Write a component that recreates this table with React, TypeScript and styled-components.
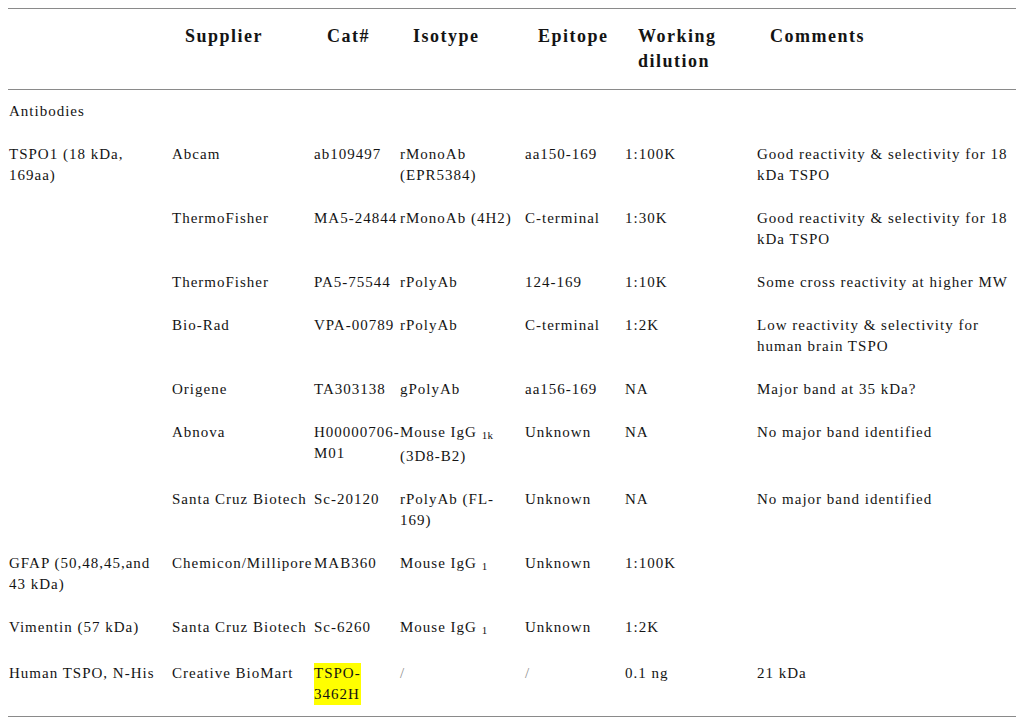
import React from "react";
import styled, { createGlobalStyle } from "styled-components";

const GlobalStyle = createGlobalStyle`
  html, body {
    margin: 0;
    padding: 0;
    background: #ffffff;
  }
`;

const SERIF = `"Liberation Serif", "Times New Roman", serif`;
const COLUMNS = "163px 142px 86px 125px 100px 132px 1fr";

type Row = {
  target?: React.ReactNode;
  supplier?: React.ReactNode;
  cat?: React.ReactNode;
  isotype?: React.ReactNode;
  epitope?: React.ReactNode;
  dilution?: React.ReactNode;
  comments?: React.ReactNode;
};

export default function App() {
  const rows: Row[] = [
    {
      target: (
        <>
          TSPO1 (18 kDa,
          <br />
          169aa)
        </>
      ),
      supplier: "Abcam",
      cat: "ab109497",
      isotype: (
        <>
          rMonoAb
          <br />
          (EPR5384)
        </>
      ),
      epitope: "aa150-169",
      dilution: "1:100K",
      comments: (
        <>
          Good reactivity &amp; selectivity for 18
          <br />
          kDa TSPO
        </>
      ),
    },
    {
      supplier: "ThermoFisher",
      cat: "MA5-24844",
      isotype: "rMonoAb (4H2)",
      epitope: "C-terminal",
      dilution: "1:30K",
      comments: (
        <>
          Good reactivity &amp; selectivity for 18
          <br />
          kDa TSPO
        </>
      ),
    },
    {
      supplier: "ThermoFisher",
      cat: "PA5-75544",
      isotype: "rPolyAb",
      epitope: "124-169",
      dilution: "1:10K",
      comments: "Some cross reactivity at higher MW",
    },
    {
      supplier: "Bio-Rad",
      cat: "VPA-00789",
      isotype: "rPolyAb",
      epitope: "C-terminal",
      dilution: "1:2K",
      comments: (
        <>
          Low reactivity &amp; selectivity for
          <br />
          human brain TSPO
        </>
      ),
    },
    {
      supplier: "Origene",
      cat: "TA303138",
      isotype: "gPolyAb",
      epitope: "aa156-169",
      dilution: "NA",
      comments: "Major band at 35 kDa?",
    },
    {
      supplier: "Abnova",
      cat: (
        <>
          H00000706-
          <br />
          M01
        </>
      ),
      isotype: (
        <>
          Mouse IgG <Sub>1k</Sub>
          <br />
          (3D8-B2)
        </>
      ),
      epitope: "Unknown",
      dilution: "NA",
      comments: "No major band identified",
    },
    {
      supplier: "Santa Cruz Biotech",
      cat: "Sc-20120",
      isotype: (
        <>
          rPolyAb (FL-
          <br />
          169)
        </>
      ),
      epitope: "Unknown",
      dilution: "NA",
      comments: "No major band identified",
    },
    {
      target: (
        <>
          GFAP (50,48,45,and
          <br />
          43 kDa)
        </>
      ),
      supplier: "Chemicon/Millipore",
      cat: "MAB360",
      isotype: (
        <>
          Mouse IgG <Sub>1</Sub>
        </>
      ),
      epitope: "Unknown",
      dilution: "1:100K",
    },
    {
      target: "Vimentin (57 kDa)",
      supplier: "Santa Cruz Biotech",
      cat: "Sc-6260",
      isotype: (
        <>
          Mouse IgG <Sub>1</Sub>
        </>
      ),
      epitope: "Unknown",
      dilution: "1:2K",
    },
    {
      target: "Human TSPO, N-His",
      supplier: "Creative BioMart",
      cat: (
        <Highlight>
          TSPO-
          <br />
          3462H
        </Highlight>
      ),
      isotype: <Slash>/</Slash>,
      epitope: <Slash>/</Slash>,
      dilution: "0.1 ng",
      comments: "21 kDa",
    },
  ];

  return (
    <>
      <GlobalStyle />
      <Table>
        <HeaderRow>
          <HeadCell />
          <HeadCell>Supplier</HeadCell>
          <HeadCell>Cat#</HeadCell>
          <HeadCell>Isotype</HeadCell>
          <HeadCell>Epitope</HeadCell>
          <HeadCell>
            Working
            <br />
            dilution
          </HeadCell>
          <HeadCell>Comments</HeadCell>
        </HeaderRow>
        <Body>
          <BodyRow>
            <Cell>Antibodies</Cell>
          </BodyRow>
          {rows.map((r, i) => (
            <BodyRow key={i}>
              <Cell>{r.target}</Cell>
              <Cell>{r.supplier}</Cell>
              <Cell>{r.cat}</Cell>
              <Cell>{r.isotype}</Cell>
              <Cell>{r.epitope}</Cell>
              <Cell>{r.dilution}</Cell>
              <Cell>{r.comments}</Cell>
            </BodyRow>
          ))}
        </Body>
      </Table>
    </>
  );
}

const Table = styled.div`
  margin: 8px 8px 0;
  width: 1008px;
  font-family: ${SERIF};
  color: #141414;
  border-top: 1px solid #8a8a8a;
  border-bottom: 1px solid #8a8a8a;
`;

const HeaderRow = styled.div`
  display: grid;
  grid-template-columns: ${COLUMNS};
  padding: 15px 0 15px 14px;
  border-bottom: 1px solid #8a8a8a;
`;

const HeadCell = styled.div`
  font-family: ${SERIF};
  font-weight: 700;
  font-size: 18px;
  line-height: 25px;
  letter-spacing: 1.5px;
  white-space: nowrap;
`;

const Body = styled.div`
  display: flex;
  flex-direction: column;
`;

const BodyRow = styled.div`
  display: grid;
  grid-template-columns: ${COLUMNS};
  padding: 11px 0 11px 1px;
`;

const Cell = styled.div`
  font-family: ${SERIF};
  font-size: 15px;
  line-height: 21px;
  letter-spacing: 1px;
  white-space: nowrap;
`;

const Sub = styled.span`
  font-size: 11px;
  letter-spacing: 0.3px;
  line-height: 21px;
  vertical-align: -2px;
`;

const Highlight = styled.span`
  display: inline-block;
  background: #ffff00;
`;

const Slash = styled.span`
  color: #8c8c8c;
`;
